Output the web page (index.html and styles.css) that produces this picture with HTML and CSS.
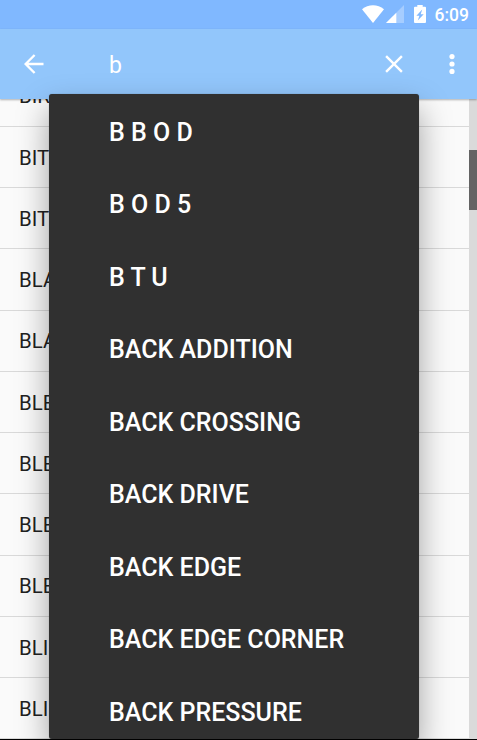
FILE: index.html
```html
<!DOCTYPE html>
<html lang="en">
<head>
    <meta charset="UTF-8">
    <meta name="viewport" content="width=device-width, initial-scale=1.0">
    <title>Search</title>
    <link rel="stylesheet" href="styles.css">
</head>
<body>

<div class="screen">
    <div class="status-bar">
        <svg class="wifi" width="22" height="18" viewBox="0 0 22 18">
            <path d="M0 4.2C6.3-1.1 15.7-1.1 22 4.2L11 18z"/>
        </svg>
        <svg class="signal" width="18" height="18" viewBox="0 0 18 18">
            <path d="M0 18L18 0v18z" opacity="0.3"/>
            <path d="M0 18L10.3 7.7V18z"/>
        </svg>
        <svg class="battery" width="12" height="18" viewBox="0 0 12 18">
            <path fill-rule="evenodd" d="M1 1.8H3.3V0H8.7V1.8H11a1 1 0 0 1 1 1V17a1 1 0 0 1-1 1H1a1 1 0 0 1-1-1V2.8a1 1 0 0 1 1-1zM8.2 4.6L2.4 10.8H5.4L3.8 15.6L9.7 9.2H6.7z"/>
        </svg>
        <span class="clock">6:09</span>
    </div>

    <header class="toolbar">
        <button class="icon-btn back-btn" aria-label="Back">
            <svg width="20" height="20" viewBox="0 0 20 20">
                <path d="M19.5 10H1.8M10.6 1L1.6 10l9 9"/>
            </svg>
        </button>
        <input class="search-input" type="text" value="b">
        <button class="icon-btn clear-btn" aria-label="Clear">
            <svg width="18" height="18" viewBox="0 0 18 18">
                <path d="M1.1 1.1l15.8 15.8M16.9 1.1L1.1 16.9"/>
            </svg>
        </button>
        <button class="icon-btn more-btn" aria-label="More">
            <svg class="dots" width="6" height="20" viewBox="0 0 6 20">
                <circle cx="3" cy="2.6" r="2.6"/>
                <circle cx="3" cy="10" r="2.6"/>
                <circle cx="3" cy="17.4" r="2.6"/>
            </svg>
        </button>
    </header>

    <main class="content">
        <ul class="list">
            <li>BIR</li>
            <li>BIT</li>
            <li>BIT</li>
            <li>BLA</li>
            <li>BLA</li>
            <li>BLE</li>
            <li>BLE</li>
            <li>BLE</li>
            <li>BLE</li>
            <li>BLI</li>
            <li>BLI</li>
        </ul>
        <div class="scroll-track">
            <div class="scroll-thumb"></div>
        </div>
    </main>

    <ul class="suggestions">
        <li>B B O D</li>
        <li>B O D 5</li>
        <li>B T U</li>
        <li>BACK ADDITION</li>
        <li>BACK CROSSING</li>
        <li>BACK DRIVE</li>
        <li>BACK EDGE</li>
        <li>BACK EDGE CORNER</li>
        <li>BACK PRESSURE</li>
    </ul>
</div>

</body>
</html>
```
FILE: styles.css
```css
* {
    box-sizing: border-box;
    margin: 0;
    padding: 0;
    font-family: Roboto, sans-serif;
}

body {
    background: #fafafa;
    overflow: hidden;
}

ul {
    list-style: none;
}

.screen {
    position: relative;
    display: flex;
    flex-direction: column;
    width: 477px;
    height: 740px;
    overflow: hidden;
    border-bottom: 1px solid #000;
}

.status-bar {
    display: flex;
    align-items: center;
    justify-content: flex-end;
    flex: none;
    height: 29px;
    padding-bottom: 1px;
    padding-right: 8px;
    background: #80b8ff;
    color: #fff;
    fill: #fff;
}

.signal {
    margin-left: 2px;
}

.battery {
    margin-left: 10px;
}

.clock {
    margin-left: 8.6px;
    padding-top: 1px;
    font-size: 17.5px;
    font-weight: 500;
    line-height: 28px;
}

.toolbar {
    position: relative;
    display: flex;
    align-items: center;
    flex: none;
    height: 70px;
    padding: 0 10.5px 0 19px;
    background: #92c6fb;
    box-shadow: 0 1px 2px rgba(0, 0, 0, 0.3);
}

.icon-btn {
    display: flex;
    align-items: center;
    justify-content: center;
    width: 30px;
    height: 40px;
    background: none;
    border: none;
    fill: none;
    stroke: #fff;
    stroke-width: 2.4;
}

.search-input {
    flex: 1;
    min-width: 0;
    height: 40px;
    margin-left: 60px;
    padding-top: 3px;
    background: none;
    border: none;
    outline: none;
    color: #fff;
    font-size: 23px;
}

.more-btn {
    margin-left: 27.5px;
}

.dots {
    fill: #fff;
    stroke: none;
}

.content {
    display: flex;
    flex: 1;
    min-height: 0;
    overflow: hidden;
}

.list {
    flex: 1;
    margin-top: -33.4px;
}

.list li {
    height: 61.25px;
    padding-top: 0.7px;
    padding-left: 19px;
    border-bottom: 1px solid #d9d9d9;
    color: #212121;
    font-size: 20.4px;
    line-height: 61.25px;
}

.scroll-track {
    width: 8px;
    padding-top: 51px;
    background: #dadada;
}

.scroll-thumb {
    height: 60px;
    background: #646464;
}

.suggestions {
    position: absolute;
    top: 94px;
    left: 49px;
    width: 370px;
    height: 645px;
    padding-top: 2.6px;
    overflow: hidden;
    background: #303030;
    border-radius: 3px;
    box-shadow: 0 15px 32px rgba(0, 0, 0, 0.36), 0 0 1px rgba(0, 0, 0, 0.4);
}

.suggestions li {
    height: 72.5px;
    padding-left: 60px;
    color: #fff;
    font-size: 25px;
    font-weight: 500;
    line-height: 72.5px;
}
```
